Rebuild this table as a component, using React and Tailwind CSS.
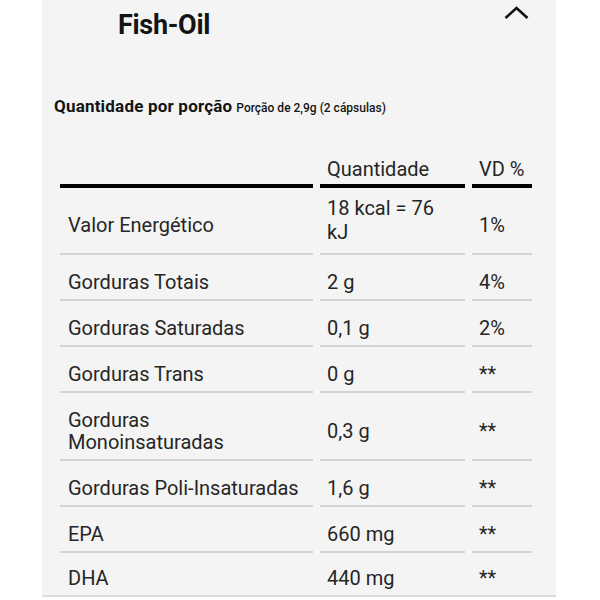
export default function App() {
  const rows = [
    { c: ["Valor Energético", "18 kcal = 76 kJ", "1%"], h: "h-[67px]", two: true },
    { c: ["Gorduras Totais", "2 g", "4%"], h: "h-[46px]" },
    { c: ["Gorduras Saturadas", "0,1 g", "2%"], h: "h-[46px]" },
    { c: ["Gorduras Trans", "0 g", "**"], h: "h-[46px]" },
    { c: ["Gorduras Monoinsaturadas", "0,3 g", "**"], h: "h-[68px]" },
    { c: ["Gorduras Poli-Insaturadas", "1,6 g", "**"], h: "h-[46px]" },
    { c: ["EPA", "660 mg", "**"], h: "h-[46px]" },
    { c: ["DHA", "440 mg", "**"], h: "h-[40px]", last: true },
  ];
  const font = { fontFamily: "Roboto, 'Noto Sans', sans-serif" };
  return (
    <div className="w-[600px] h-[600px] bg-white overflow-hidden" style={font}>
      <div className="ml-[42px] w-[514px] h-[597px] bg-[#f4f4f4] border-b-2 border-[#dcdcdc] flex flex-col">
        <div className="flex justify-between pl-[76px] pr-[27px] pt-[9px]">
          <div className="text-[27px] leading-[32px] font-bold text-[#141414] tracking-[-0.3px]">Fish-Oil</div>
          <svg width="25" height="14" viewBox="0 0 25 14" className="-mt-[3px]">
            <polyline points="1.5,12 12.5,2 23.5,12" fill="none" stroke="#111" strokeWidth="2.6" />
          </svg>
        </div>
        <div className="mt-[55px] pl-[12px] leading-[20px] text-[#141414]">
          <span className="text-[17px] font-bold tracking-[0.2px]">Quantidade por porção</span>{" "}
          <span className="text-[12px] font-medium">Porção de 2,9g (2 cápsulas)</span>
        </div>
        <div className="mt-[40px] ml-[18px] grid grid-cols-[253px_145px_60px] gap-x-[7px] text-[20px] leading-[22px] text-[#262626]">
          <div className="border-b-4 border-black pb-[4px]"></div>
          <div className="border-b-4 border-black pb-[4px] pl-[7px]">Quantidade</div>
          <div className="border-b-4 border-black pb-[4px] pl-[7px]">VD %</div>
          {rows.map((r, i) => {
            const b = r.last ? "" : "border-b-2 border-[#d4d4d4]";
            return (
              <div key={i} className="contents">
                <div className={`${r.h} ${b} flex items-center pt-[9px] pl-[8px] pr-[12px]`}>{r.c[0]}</div>
                <div className={`${r.h} ${b} flex items-center pl-[7px] pr-[10px] ${r.two ? "pb-[1px] leading-[24px]" : "pt-[9px]"}`}>{r.c[1]}</div>
                <div className={`${r.h} ${b} flex items-center pt-[9px] pl-[7px]`}>{r.c[2]}</div>
              </div>
            );
          })}
        </div>
      </div>
    </div>
  );
}
